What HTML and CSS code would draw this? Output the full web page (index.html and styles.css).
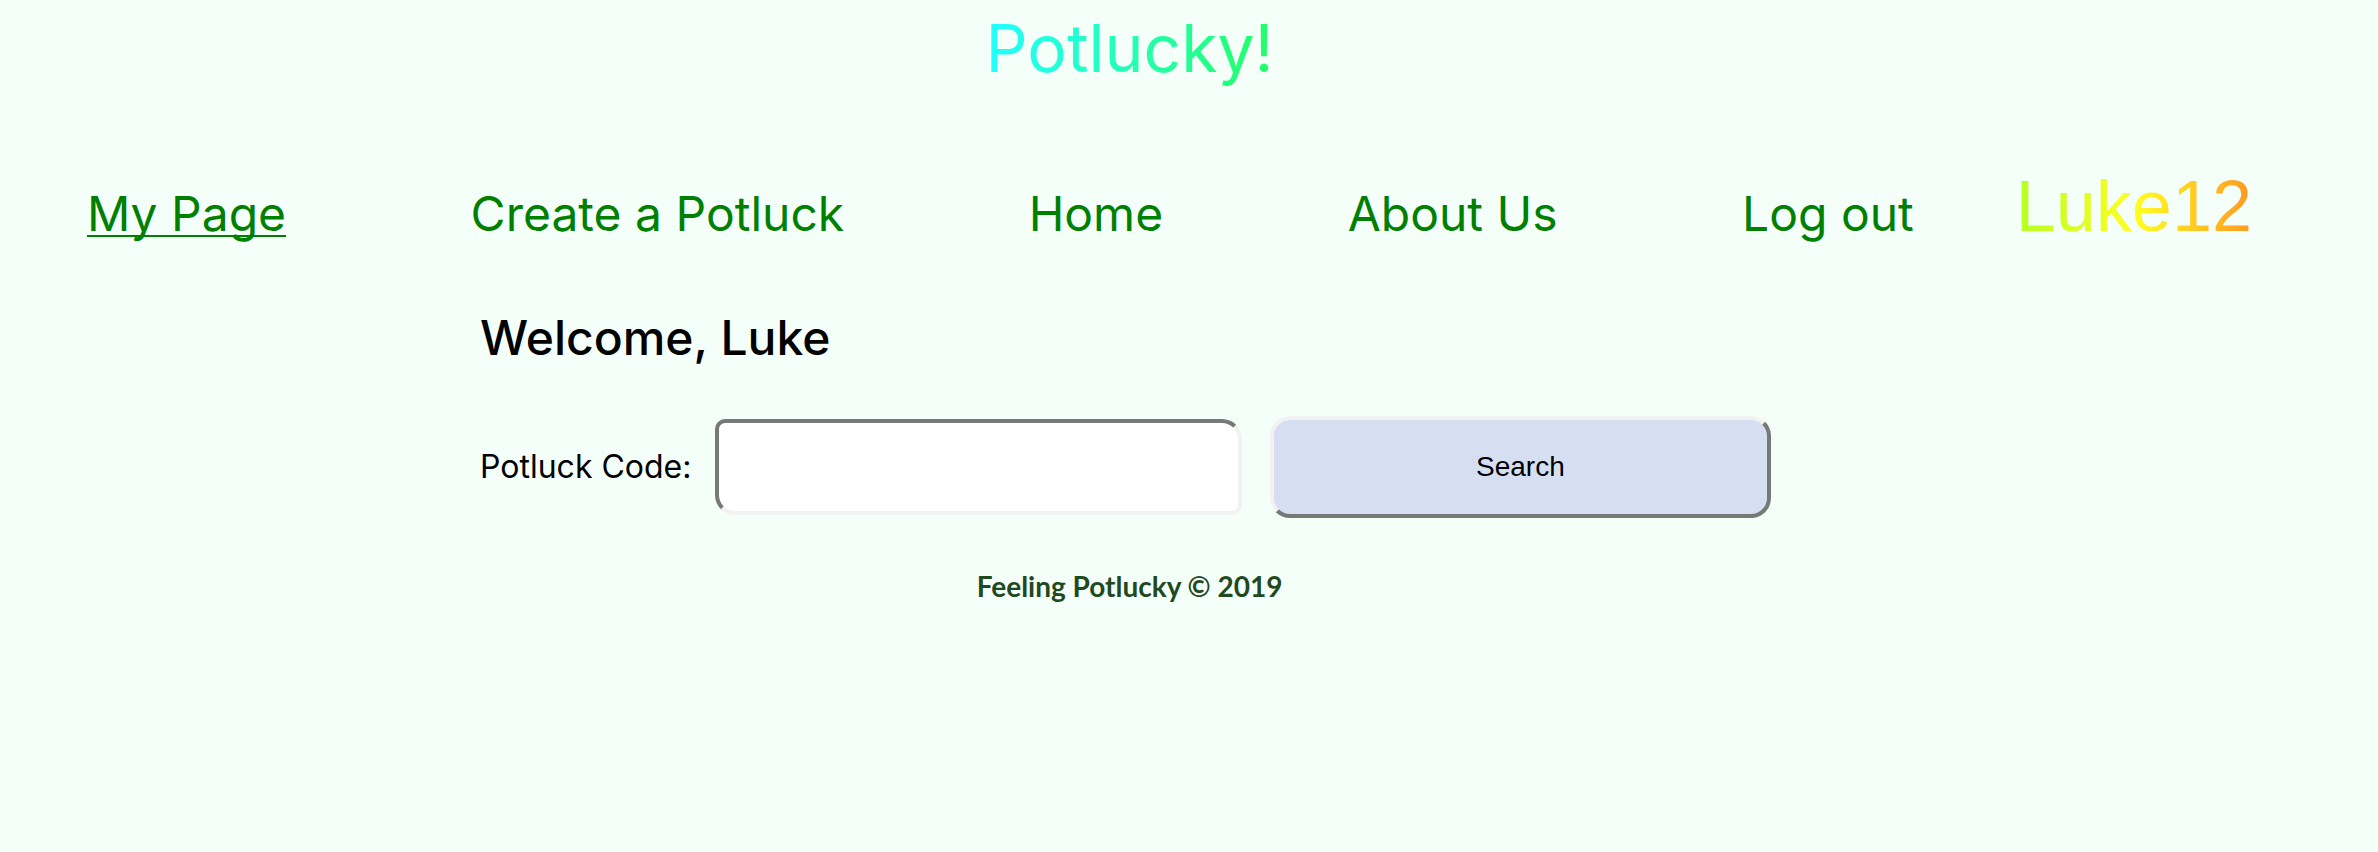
FILE: index.html
```html
<!DOCTYPE html>
<html lang="en">
<head>
<meta charset="utf-8">
<title>Potlucky!</title>
<link rel="stylesheet" href="styles.css">
</head>
<body>
<header>
  <h1 class="brand"><span class="brand-text">Potlucky!</span></h1>
  <nav class="nav">
    <ul class="nav-list">
      <li><a class="nav-link active" href="#me">My Page</a></li>
      <li><a class="nav-link" href="#create">Create a Potluck</a></li>
      <li><a class="nav-link" href="#home">Home</a></li>
      <li><a class="nav-link" href="#about">About Us</a></li>
      <li><a class="nav-link" href="#logout">Log out</a></li>
    </ul>
    <span class="username">Luke12</span>
  </nav>
</header>
<main class="main">
  <h2 class="welcome">Welcome, Luke</h2>
  <form class="search">
    <label class="search-label" for="code">Potluck Code:</label>
    <input class="search-input" id="code" type="text">
    <button class="search-button" type="button">Search</button>
  </form>
</main>
<footer class="footer">Feeling Potlucky © 2019</footer>
</body>
</html>
```
FILE: styles.css
```css
* {
  box-sizing: border-box;
}

body {
  margin: 0;
  background: #f5fffa;
  color: #000;
  font-family: Inter, sans-serif;
}

.brand {
  display: flex;
  justify-content: center;
  margin: 0;
  padding: 8px 5% 0 0;
  font-size: 66px;
  font-weight: 400;
  line-height: 80px;
}

.brand-text {
  background: linear-gradient(to right, #22ffff, #22ff66);
  background-clip: text;
  -webkit-background-clip: text;
  color: transparent;
}

.nav {
  display: flex;
  align-items: baseline;
  gap: 102px;
  margin-top: 68px;
  padding: 0 126px 0 87px;
}

.nav-list {
  display: flex;
  flex: 1;
  justify-content: space-between;
  margin: 0;
  padding: 0;
  list-style: none;
}

.nav-link {
  color: #008000;
  font-size: 48px;
  line-height: 60px;
  text-decoration: none;
}

.nav-link.active {
  text-decoration: underline;
  text-decoration-thickness: 2px;
  text-underline-offset: 4px;
  text-decoration-skip-ink: none;
}

.username {
  background: linear-gradient(to right, #b4ff22, #ffff22 50%, #ff9922);
  background-clip: text;
  -webkit-background-clip: text;
  color: transparent;
  font-family: "Liberation Sans", sans-serif;
  font-size: 72px;
  line-height: 100px;
}

.main {
  padding: 0 607px 0 480px;
}

.welcome {
  margin: 52px 0 0;
  font-size: 48px;
  font-weight: 500;
  line-height: 60px;
}

.search {
  display: flex;
  align-items: center;
  margin-top: 48px;
}

.search-label {
  flex: none;
  width: 235px;
  font-size: 32px;
  line-height: 40px;
}

.search-input {
  flex: 528;
  min-width: 0;
  height: 96px;
  margin-right: 28px;
  padding: 0 20px;
  background: #fff;
  border: 4px solid;
  border-color: #767a76 #f2f2f2 #f2f2f2 #767a76;
  border-radius: 10px 20px;
  font: 32px Inter, sans-serif;
}

.search-button {
  flex: 500;
  min-width: 0;
  height: 102px;
  padding: 0 20px;
  background: #d6dff1;
  border: 4px solid;
  border-color: #f2f2f2 #767a76 #767a76 #f2f2f2;
  border-radius: 20px;
  color: #000;
  font: 28px "Liberation Sans", sans-serif;
}

.footer {
  margin-top: 48px;
  padding-right: 5%;
  color: #1f4a1f;
  font-family: Lato, sans-serif;
  font-size: 28px;
  font-weight: 700;
  line-height: 40px;
  text-align: center;
}
```
